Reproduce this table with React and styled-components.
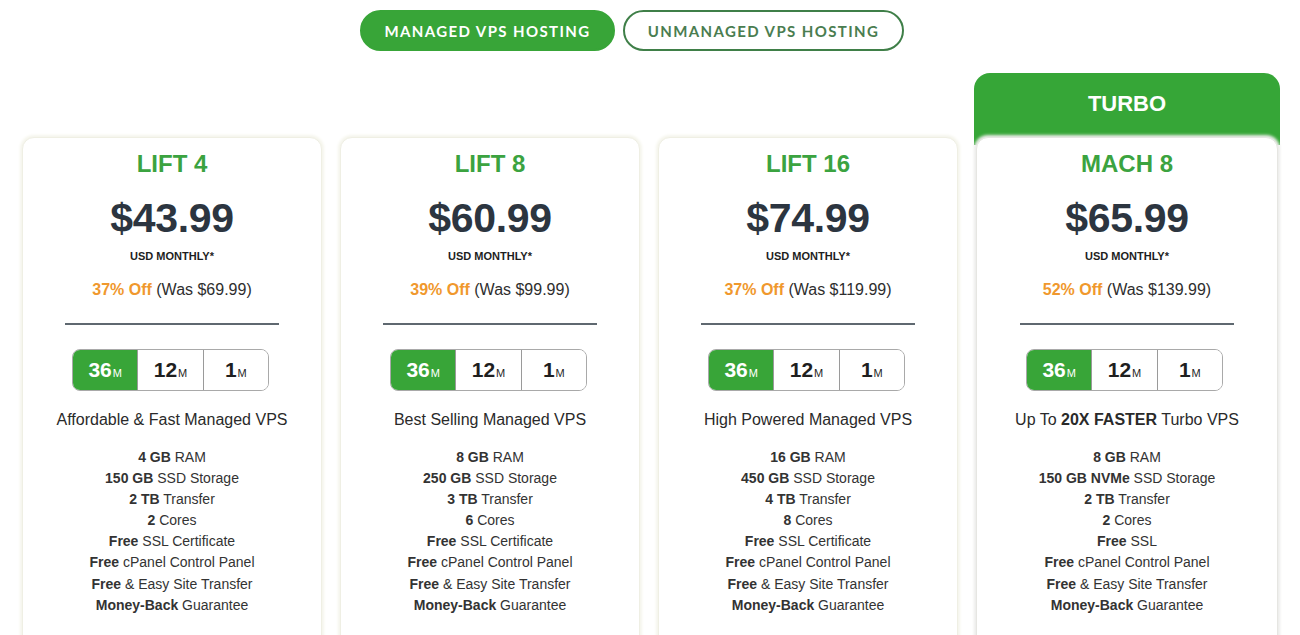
import React from "react";
import styled, { createGlobalStyle } from "styled-components";

const GlobalStyle = createGlobalStyle`
  html, body {
    margin: 0;
    padding: 0;
    background: #ffffff;
    overflow: hidden;
  }
  body {
    font-family: "Liberation Sans", Arial, sans-serif;
    color: #2b2b2b;
  }
`;

const Page = styled.div`
  width: 1300px;
  height: 635px;
  overflow: hidden;
`;

const TabRow = styled.div`
  display: flex;
  justify-content: center;
  gap: 8px;
  padding: 10px 36px 0 0;
`;

const Tab = styled.button`
  height: 41px;
  width: ${p => p.w}px;
  border-radius: 21px;
  border: 2px solid ${p => (p.active ? "#38a538" : "#3f7f48")};
  background: ${p => (p.active ? "#38a538" : "#ffffff")};
  color: ${p => (p.active ? "#ffffff" : "#4a7d50")};
  font-family: "Lato", "Noto Sans", sans-serif;
  font-weight: 700;
  font-size: 15px;
  letter-spacing: 1.4px;
  cursor: pointer;
`;

const Grid = styled.div`
  display: grid;
  grid-template-columns: 300px 300px 300px 304px;
  column-gap: 18px;
  padding: 22px 0 0 22px;
  align-items: end;
`;

const Column = styled.div`
  display: flex;
  flex-direction: column;
  margin-left: ${p => (p.turbo ? "-2px" : "0")};
`;

const Banner = styled.div`
  height: 72px;
  margin-bottom: -8px;
  background: #36a637;
  border-radius: 16px 16px 0 0;
  color: #ffffff;
  font-weight: 700;
  font-size: 22px;
  text-align: center;
  line-height: 62px;
`;

const Card = styled.div`
  position: relative;
  height: 520px;
  margin: ${p => (p.turbo ? "0 2px" : "0")};
  background: #ffffff;
  border-radius: 12px 12px 0 0;
  border: 1px solid ${p => (p.turbo ? "#e6e6e2" : "#efefe4")};
  box-shadow: 0 0 3px 2px ${p => (p.turbo ? "#ececea" : "#f5f5ec")};
  padding-top: 12px;
  text-align: center;
  box-sizing: border-box;
`;

const PlanName = styled.div`
  color: #3ba340;
  font-weight: 700;
  font-size: 24px;
  line-height: 28px;
`;

const Price = styled.div`
  margin-top: 17px;
  color: #2c3540;
  font-weight: 700;
  font-size: 41px;
  line-height: 46px;
  letter-spacing: -0.3px;
`;

const Period = styled.div`
  margin-top: 8px;
  font-size: 11px;
  line-height: 14px;
  font-weight: 700;
  color: #1e1e1e;
`;

const Discount = styled.div`
  margin-top: 17px;
  font-size: 16px;
  line-height: 20px;
  color: #2e2e2e;
`;

const Off = styled.span`
  color: #f0982d;
  font-weight: 700;
`;

const Divider = styled.div`
  width: 214px;
  height: 2px;
  margin: 23px auto 0;
  background: #5f6870;
`;

const Toggle = styled.div`
  display: flex;
  width: 197px;
  height: 42px;
  margin: 24px 0 0 49px;
  border: 1px solid #a9a9a9;
  border-radius: 8px;
  overflow: hidden;
  box-sizing: border-box;
`;

const Term = styled.div`
  flex: 1;
  display: flex;
  align-items: center;
  justify-content: center;
  background: ${p => (p.active ? "#38a538" : "#ffffff")};
  color: ${p => (p.active ? "#ffffff" : "#1f1f1f")};
  border-left: ${p => (p.first ? "none" : "1px solid #9a9a9a")};
  font-weight: 700;
  font-size: 21px;
`;

const TermUnit = styled.span`
  font-size: 11px;
  font-weight: 400;
  margin-left: 1px;
  margin-top: 6px;
`;

const Tagline = styled.div`
  margin-top: 19px;
  font-size: 16px;
  line-height: 20px;
  color: #2a2a2a;
`;

const Features = styled.ul`
  list-style: none;
  margin: 17px 0 0;
  padding: 0;
  font-size: 14px;
  line-height: 21.1px;
  color: #333333;
`;

const plans = [
  {
    name: "LIFT 4",
    price: "$43.99",
    off: "37% Off",
    was: "$69.99",
    tagline: <>Affordable &amp; Fast Managed VPS</>,
    features: [
      ["4 GB", " RAM"],
      ["150 GB", " SSD Storage"],
      ["2 TB", " Transfer"],
      ["2", " Cores"],
      ["Free", " SSL Certificate"],
      ["Free", " cPanel Control Panel"],
      ["Free", " & Easy Site Transfer"],
      ["Money-Back", " Guarantee"],
    ],
  },
  {
    name: "LIFT 8",
    price: "$60.99",
    off: "39% Off",
    was: "$99.99",
    tagline: <>Best Selling Managed VPS</>,
    features: [
      ["8 GB", " RAM"],
      ["250 GB", " SSD Storage"],
      ["3 TB", " Transfer"],
      ["6", " Cores"],
      ["Free", " SSL Certificate"],
      ["Free", " cPanel Control Panel"],
      ["Free", " & Easy Site Transfer"],
      ["Money-Back", " Guarantee"],
    ],
  },
  {
    name: "LIFT 16",
    price: "$74.99",
    off: "37% Off",
    was: "$119.99",
    tagline: <>High Powered Managed VPS</>,
    features: [
      ["16 GB", " RAM"],
      ["450 GB", " SSD Storage"],
      ["4 TB", " Transfer"],
      ["8", " Cores"],
      ["Free", " SSL Certificate"],
      ["Free", " cPanel Control Panel"],
      ["Free", " & Easy Site Transfer"],
      ["Money-Back", " Guarantee"],
    ],
  },
  {
    name: "MACH 8",
    price: "$65.99",
    off: "52% Off",
    was: "$139.99",
    turbo: true,
    tagline: <>Up To <b>20X FASTER</b> Turbo VPS</>,
    features: [
      ["8 GB", " RAM"],
      ["150 GB NVMe", " SSD Storage"],
      ["2 TB", " Transfer"],
      ["2", " Cores"],
      ["Free", " SSL"],
      ["Free", " cPanel Control Panel"],
      ["Free", " & Easy Site Transfer"],
      ["Money-Back", " Guarantee"],
    ],
  },
];

function PlanCard({ plan }) {
  return (
    <Card turbo={plan.turbo}>
      <PlanName>{plan.name}</PlanName>
      <Price>{plan.price}</Price>
      <Period>USD MONTHLY*</Period>
      <Discount>
        <Off>{plan.off}</Off> (Was {plan.was})
      </Discount>
      <Divider />
      <Toggle>
        <Term active first>36<TermUnit>M</TermUnit></Term>
        <Term>12<TermUnit>M</TermUnit></Term>
        <Term>1<TermUnit>M</TermUnit></Term>
      </Toggle>
      <Tagline>{plan.tagline}</Tagline>
      <Features>
        {plan.features.map(([strong, rest], i) => (
          <li key={i}>
            <b>{strong}</b>
            {rest}
          </li>
        ))}
      </Features>
    </Card>
  );
}

export default function App() {
  return (
    <Page>
      <GlobalStyle />
      <TabRow>
        <Tab active w={255}>MANAGED VPS HOSTING</Tab>
        <Tab w={281}>UNMANAGED VPS HOSTING</Tab>
      </TabRow>
      <Grid>
        {plans.map(plan => (
          <Column key={plan.name} turbo={plan.turbo}>
            {plan.turbo && <Banner>TURBO</Banner>}
            <PlanCard plan={plan} />
          </Column>
        ))}
      </Grid>
    </Page>
  );
}
